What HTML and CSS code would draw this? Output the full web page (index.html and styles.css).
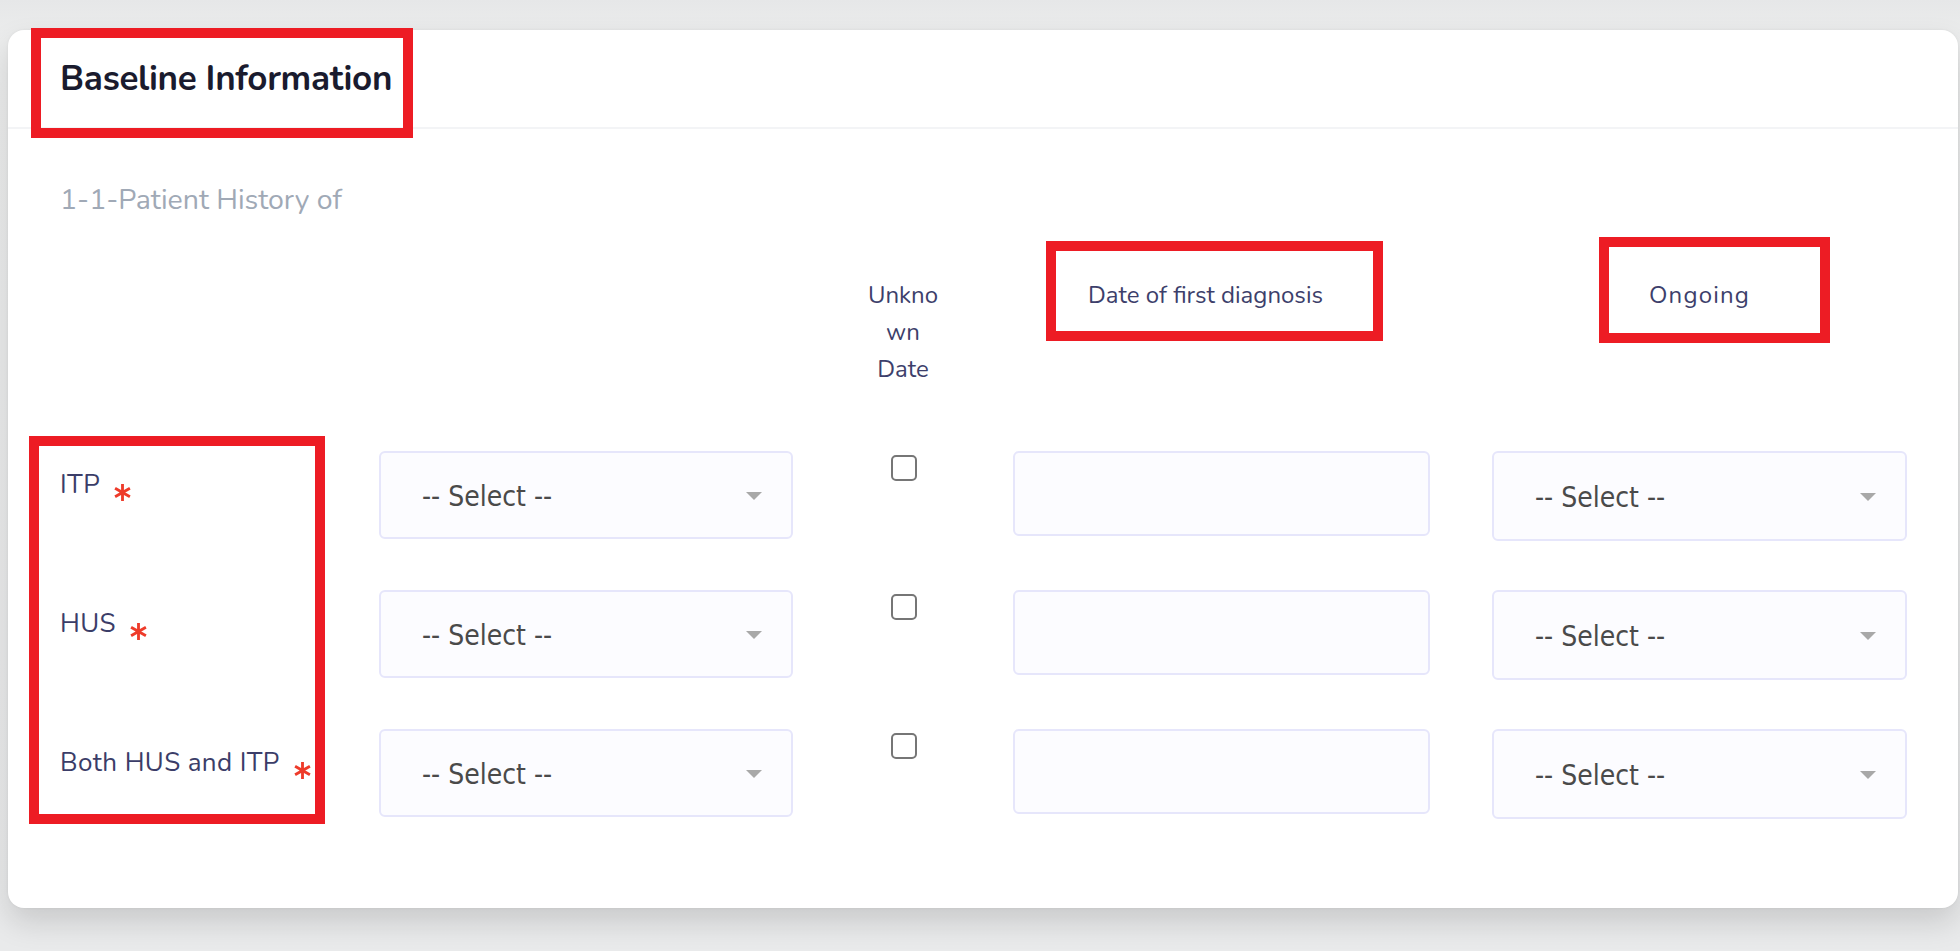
FILE: index.html
```html
<!DOCTYPE html>
<html lang="en">
<head>
<meta charset="utf-8">
<title>Baseline Information</title>
<link rel="stylesheet" href="styles.css">
</head>
<body>
<div class="page">
  <section class="card">
    <header class="card-head">
      <h2 class="card-title">Baseline Information</h2>
    </header>
    <div class="card-body">
      <p class="subtitle">1-1-Patient History of</p>
      <div class="grid">
        <div class="hcell"></div>
        <div class="hcell"></div>
        <div class="hcell"><span class="narrow">Unknown Date</span></div>
        <div class="hcell hdate"><span>Date of first diagnosis</span></div>
        <div class="hcell end"><span>Ongoing</span></div>

        <div class="label">ITP<svg class="req" viewBox="0 0 20 20"><path d="M10 1v18M2.2 5.5l15.6 9M2.2 14.5l15.6-9"/></svg></div>
        <div class="select"><span>-- Select --</span><svg class="caret" viewBox="0 0 16 8"><path d="M0 0h16L8 8z"/></svg></div>
        <div class="cbcell"><input type="checkbox" class="cb"></div>
        <div class="input"></div>
        <div class="select end"><span>-- Select --</span><svg class="caret" viewBox="0 0 16 8"><path d="M0 0h16L8 8z"/></svg></div>

        <div class="label">HUS<svg class="req" viewBox="0 0 20 20"><path d="M10 1v18M2.2 5.5l15.6 9M2.2 14.5l15.6-9"/></svg></div>
        <div class="select"><span>-- Select --</span><svg class="caret" viewBox="0 0 16 8"><path d="M0 0h16L8 8z"/></svg></div>
        <div class="cbcell"><input type="checkbox" class="cb"></div>
        <div class="input"></div>
        <div class="select end"><span>-- Select --</span><svg class="caret" viewBox="0 0 16 8"><path d="M0 0h16L8 8z"/></svg></div>

        <div class="label">Both HUS and ITP<svg class="req" viewBox="0 0 20 20"><path d="M10 1v18M2.2 5.5l15.6 9M2.2 14.5l15.6-9"/></svg></div>
        <div class="select"><span>-- Select --</span><svg class="caret" viewBox="0 0 16 8"><path d="M0 0h16L8 8z"/></svg></div>
        <div class="cbcell"><input type="checkbox" class="cb"></div>
        <div class="input"></div>
        <div class="select end"><span>-- Select --</span><svg class="caret" viewBox="0 0 16 8"><path d="M0 0h16L8 8z"/></svg></div>
      </div>
    </div>
  </section>
</div>
<div class="mark mark-title"></div>
<div class="mark mark-date"></div>
<div class="mark mark-ongoing"></div>
<div class="mark mark-labels"></div>
</body>
</html>
```
FILE: styles.css
```css
html, body {
  margin: 0;
  padding: 0;
}
body {
  width: 1960px;
  height: 951px;
  overflow: hidden;
  position: relative;
  background: linear-gradient(#e6e7e8, #eceded 40px, #e9eaeb);
  font-family: "Nunito", "Lato", "Noto Sans", sans-serif;
}
.page {
  padding: 30px 2px 0 8px;
}
.card {
  background: #ffffff;
  border-radius: 16px;
  height: 878px;
  box-shadow: 0 14px 30px rgba(0, 0, 0, 0.14), 0 0 3px rgba(0, 0, 0, 0.06);
}
.card-head {
  height: 97px;
  border-bottom: 2px solid #f3f4f6;
  display: flex;
  align-items: center;
  padding-left: 52px;
}
.card-title {
  margin: 0;
  font-size: 35px;
  font-weight: 700;
  color: #1a1b2e;
  letter-spacing: -0.3px;
}
.card-body {
  padding: 0 51px 0 52px;
}
.subtitle {
  margin: 52px 0 0;
  font-size: 28.5px;
  line-height: 37px;
  color: #a0a9b6;
}
.grid {
  margin-top: 59px;
  display: grid;
  grid-template-columns: 319px 414px 220px 417px 1fr;
  row-gap: 49px;
  align-items: start;
}
.hcell {
  font-size: 24px;
  line-height: 37px;
  color: #3d3f6b;
  text-align: center;
  padding-bottom: 14px;
  min-width: 0;
}
.hcell.hdate {
  padding-right: 32px;
}
.hcell.end {
  justify-self: end;
  width: 415px;
  letter-spacing: 1.2px;
}
.narrow {
  display: inline-block;
  width: 80px;
  overflow-wrap: anywhere;
}
.label {
  font-size: 26px;
  line-height: 30px;
  color: #3b3d68;
  padding-top: 19px;
  white-space: nowrap;
  letter-spacing: 0.4px;
}
.req {
  width: 19px;
  height: 19px;
  margin-left: 13px;
  vertical-align: -9px;
  fill: none;
  stroke: #ee3b2a;
  stroke-width: 3;
}
.select {
  box-sizing: border-box;
  height: 88px;
  border: 2px solid #e6e6fb;
  border-radius: 6px;
  background: #fcfcff;
  display: flex;
  align-items: center;
  justify-content: space-between;
  padding: 2px 29px 0 41px;
  font-family: "Liberation Sans Narrow", "DejaVu Sans Condensed", "Liberation Sans", sans-serif;
  font-stretch: condensed;
  font-size: 28px;
  color: #4a4a4a;
}
.select.end {
  justify-self: end;
  width: 415px;
  height: 90px;
}
.caret {
  width: 16px;
  height: 8px;
  fill: #a8a8a8;
}
.cbcell {
  display: flex;
  justify-content: center;
  padding-top: 4px;
}
.cb {
  appearance: none;
  -webkit-appearance: none;
  margin: 0 0 0 2px;
  width: 26px;
  height: 26px;
  box-sizing: border-box;
  border: 2px solid #767676;
  border-radius: 5px;
  background: #fff;
}
.input {
  box-sizing: border-box;
  height: 85px;
  border: 2px solid #e6e6fb;
  border-radius: 6px;
  background: #fcfcff;
}
.mark {
  position: absolute;
  box-sizing: border-box;
  border: 10px solid #ed1c24;
}
.mark-title {
  left: 31px;
  top: 28px;
  width: 382px;
  height: 110px;
}
.mark-date {
  left: 1046px;
  top: 241px;
  width: 337px;
  height: 100px;
}
.mark-ongoing {
  left: 1599px;
  top: 237px;
  width: 231px;
  height: 106px;
}
.mark-labels {
  left: 29px;
  top: 436px;
  width: 296px;
  height: 388px;
}
```
